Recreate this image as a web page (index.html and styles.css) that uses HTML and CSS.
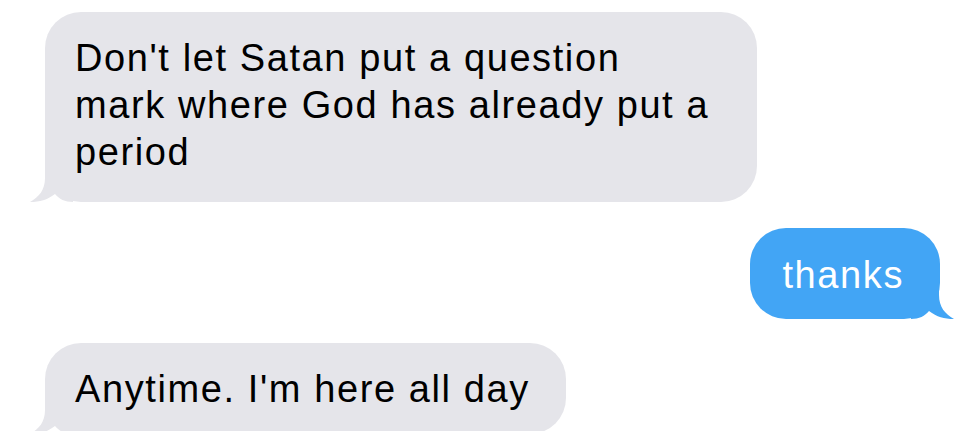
FILE: index.html
```html
<!DOCTYPE html>
<html lang="en">
<head>
    <meta charset="UTF-8">
    <meta name="viewport" content="width=device-width, initial-scale=1.0">
    <title>Messages</title>
    <link rel="stylesheet" href="styles.css">
</head>
<body>

    <!-- Conversation -->
    <div class="thread">

        <div class="msg them wide">
            Don't let Satan put a question mark where God has already put a period
            <svg class="tail" viewBox="0 0 44 40" aria-hidden="true">
                <path d="M16 0 L16 16 C16 28 10 35 1 40 C11 40 18 38 26 32 C30 37 36 40 44 40 L44 0 Z"/>
            </svg>
        </div>

        <div class="msg me">
            thanks
            <svg class="tail" viewBox="0 0 44 40" aria-hidden="true">
                <path d="M16 0 L16 16 C16 28 10 35 1 40 C11 40 18 38 26 32 C30 37 36 40 44 40 L44 0 Z"/>
            </svg>
        </div>

        <div class="msg them">
            Anytime. I'm here all day
            <svg class="tail" viewBox="0 0 44 40" aria-hidden="true">
                <path d="M16 0 L16 16 C16 28 10 35 1 40 C11 40 18 38 26 32 C30 37 36 40 44 40 L44 0 Z"/>
            </svg>
        </div>

    </div>

</body>
</html>
```

FILE: styles.css
```css
body {
    margin: 0;
    background: #fff;
    font-family: 'Liberation Sans', Arial, sans-serif;
    overflow: hidden;
}

.thread {
    display: flex;
    flex-direction: column;
    padding: 12px 40px 0 45px;
}

.msg {
    position: relative;
    width: fit-content;
    max-width: 712px;
    box-sizing: border-box;
    padding: 23px 36px 21px 30px;
    border-radius: 36px;
    font-size: 38px;
    line-height: 47px;
    letter-spacing: 1.6px;
}

.wide {
    padding-bottom: 26px;
}

.msg .tail {
    position: absolute;
    bottom: 0;
    left: -16px;
    width: 44px;
    height: 40px;
}

.them {
    background: #e5e5ea;
    color: #000;
}

.them .tail {
    fill: #e5e5ea;
}

.me {
    align-self: flex-end;
    margin: 26px 0 24px;
    background: #42a5f5;
    color: #fff;
    padding: 24px 36px 20px 32px;
}

.me .tail {
    left: auto;
    right: -15px;
    transform: scaleX(-1);
    fill: #42a5f5;
}
```
